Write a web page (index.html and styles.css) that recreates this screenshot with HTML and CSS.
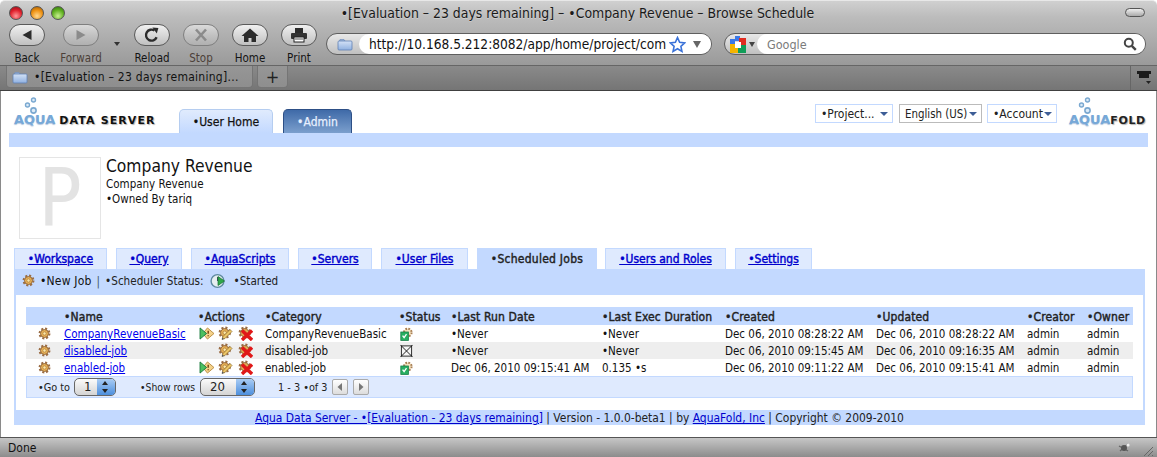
FILE: index.html
```html
<!DOCTYPE html>
<html lang="en">
<head>
<meta charset="utf-8">
<title>Browse Schedule</title>
<link rel="stylesheet" href="styles.css">
</head>
<body>
<svg class="defs" xmlns="http://www.w3.org/2000/svg">
  <defs>
    <linearGradient id="gfold" x1="0" y1="0" x2="0" y2="1"><stop offset="0" stop-color="#d4e2f6"/><stop offset="1" stop-color="#8fb0e0"/></linearGradient>
    <symbol id="gear" viewBox="0 0 14 14">
      <circle cx="7" cy="7" r="5.3" fill="none" stroke="#9a6c44" stroke-width="2.2" stroke-dasharray="2.2 1.96"/>
      <circle cx="7" cy="7" r="4.3" fill="#e6b056" stroke="#8e6238" stroke-width="1"/>
      <circle cx="7" cy="7" r="1.8" fill="#fbe8a8" stroke="#b07e3c" stroke-width=".8"/>
    </symbol>
    <symbol id="folder" viewBox="0 0 16 14">
      <path d="M3 2.5h4l1 1.5H2.5z" fill="#b8cdea" stroke="#6f8dbb" stroke-width=".7"/>
      <rect x="1" y="4" width="14" height="9" rx="1" fill="url(#gfold)" stroke="#5f80b4" stroke-width=".8"/>
    </symbol>
    <symbol id="run" viewBox="0 0 17 14">
      <path d="M9 1l7 6-7 6-5-6z" fill="#f4d28a" stroke="#b98a40"/>
      <path d="M9.8 4v3.4M9.8 8.8v1.2" stroke="#7a4a10" stroke-width="1.6"/>
      <path d="M1 1l7 6-7 6z" fill="#4cc060" stroke="#17783a"/>
    </symbol>
    <symbol id="edit" viewBox="0 0 15 15">
      <use href="#gear" x="0" y="0" width="13.5" height="13.5"/>
      <path d="M4 13.5l1-3 7-7 2 2-7 7z" fill="#ecc566" stroke="#8a6a2e" stroke-width=".7"/>
      <path d="M4 13.5l.6-1.8 1.2 1.2z" fill="#23407a"/>
    </symbol>
    <symbol id="del" viewBox="0 0 15 15">
      <use href="#gear" x="0" y="0" width="13.5" height="13.5"/>
      <path d="M4 4.5l10 9.5M14 4.5l-10 9.5" stroke="#e01818" stroke-width="3.4"/>
    </symbol>
    <symbol id="enabled" viewBox="0 0 13 14">
      <circle cx="7.8" cy="5.4" r="3.8" fill="#f6e4c0" stroke="#a87e54" stroke-width="2" stroke-dasharray="1.7 1.3"/>
      <rect x=".8" y="5" width="7.6" height="8.4" fill="#27ae60" stroke="#17804a" stroke-width=".8"/>
      <path d="M2.6 8.6l1.5 2 2.4-3.4" fill="none" stroke="#fff" stroke-width="1.3"/>
    </symbol>
    <symbol id="disabled" viewBox="0 0 14 14">
      <rect x="1.5" y="1.5" width="11" height="11" fill="#f4f4f4" stroke="#222"/>
      <path d="M.5.5l13 13M13.5.5l-13 13" stroke="#111" stroke-width="1"/>
    </symbol>
    <symbol id="started" viewBox="0 0 16 16">
      <circle cx="7.5" cy="8" r="6.4" fill="#e6eef0" stroke="#5e8aa0" stroke-width="1.4"/>
      <path d="M7.5 4v4" stroke="#446" stroke-width="1"/>
      <path d="M8 3.5l6.5 4.5L8 12.5z" fill="#2fa84a" stroke="#157030" stroke-width=".7"/>
    </symbol>
    <symbol id="bubbles" viewBox="0 0 16 18">
      <circle cx="10.5" cy="3" r="2" fill="#dcebf8" stroke="#7aa8d0" stroke-width="1.4"/>
      <circle cx="4.5" cy="8" r="2" fill="#dcebf8" stroke="#7aa8d0" stroke-width="1.4"/>
      <circle cx="10.5" cy="13.5" r="2.6" fill="#dcebf8" stroke="#7aa8d0" stroke-width="1.6"/>
    </symbol>
  </defs>
</svg>

<div class="window">
  <header class="chrome">
    <div class="titlebar">
      <div class="lights">
        <span class="light red"></span><span class="light yellow"></span><span class="light green"></span>
      </div>
      <div class="wintitle">•[Evaluation – 23 days remaining] – •Company Revenue – Browse Schedule</div>
      <span class="pill-toggle"></span>
    </div>
    <div class="toolbar">
      <div class="tool"><span class="toolbtn"><svg class="tool-ico" viewBox="0 0 20 16"><path d="M5.5 8l9-5v10z" fill="#2c2c2c"/></svg></span><span class="toollabel">Back</span></div>
      <div class="tool tool-forward dim"><span class="toolbtn"><svg class="tool-ico" viewBox="0 0 20 16"><path d="M14.5 8l-9-5v10z" fill="#8b8b8b"/></svg></span><span class="toollabel">Forward</span></div>
      <span class="histarrow"></span>
      <div class="tool"><span class="toolbtn"><svg class="tool-ico" viewBox="0 0 20 16"><path d="M14.6 10.2A5.5 5.5 0 1 1 12.6 3.6" fill="none" stroke="#2c2c2c" stroke-width="2.4"/><path d="M10.4 .4l6 .6-1.6 5.6z" fill="#2c2c2c"/></svg></span><span class="toollabel">Reload</span></div>
      <div class="tool dim"><span class="toolbtn"><svg class="tool-ico" viewBox="0 0 20 16"><path d="M5 2.5l10 11M15 2.5l-10 11" stroke="#8b8b8b" stroke-width="2.6"/></svg></span><span class="toollabel">Stop</span></div>
      <div class="tool"><span class="toolbtn"><svg class="tool-ico" viewBox="0 0 20 16"><path d="M10 1.5L1.5 9H4v6h4.5v-4h3v4H16V9h2.5z" fill="#2c2c2c"/></svg></span><span class="toollabel">Home</span></div>
      <div class="tool"><span class="toolbtn"><svg class="tool-ico" viewBox="0 0 20 16"><rect x="6" y="1" width="8" height="5" fill="#2c2c2c"/><rect x="2" y="6" width="16" height="6" rx="1" fill="#333"/><rect x="5" y="10" width="10" height="5" fill="#fff" stroke="#222"/><path d="M6 12h8" stroke="#555"/></svg></span><span class="toollabel">Print</span></div>
      <div class="address">
        <svg class="addr-ico"><use href="#folder"/></svg>
        <div class="url">
          <span class="urltext">http://10.168.5.212:8082/app/home/project/com</span>
          <svg class="star" viewBox="0 0 16 16"><path d="M8 1.5l2 4.5 4.8.5-3.6 3.2 1 4.8L8 12l-4.2 2.5 1-4.8L1.2 6.5 6 6z" fill="#fff" stroke="#3a72d8" stroke-width="1.5"/></svg>
          <span class="urlarrow"></span>
        </div>
      </div>
      <div class="search">
        <div class="engine">
          <svg class="goog" viewBox="0 0 16 17"><rect x="5" y="0" width="5" height="5" fill="#3b78e7"/><rect x="9" y="2" width="7" height="7" fill="#e02c20"/><rect x="0" y="7" width="8" height="10" fill="#f4b400"/><rect x="0" y="3" width="5" height="5" fill="#3b78e7"/><rect x="8" y="9" width="8" height="8" fill="#109d58"/><rect x="5" y="6" width="6" height="6" fill="#fff"/></svg>
          <span class="engarrow"></span>
        </div>
        <div class="searchfield">
          <span class="placeholder">Google</span>
          <svg class="mag" viewBox="0 0 14 14"><circle cx="5.8" cy="5.8" r="4" fill="none" stroke="#444" stroke-width="2"/><path d="M8.8 8.8l4 4" stroke="#444" stroke-width="2.4"/></svg>
        </div>
      </div>
    </div>
  </header>

  <nav class="tabbar">
    <div class="btab btab-main">
      <svg class="btab-ico"><use href="#folder"/></svg>
      <span>•[Evaluation – 23 days remaining]...</span>
    </div>
    <div class="btab btab-plus">+</div>
    <div class="tabbar-right">
      <svg class="tray" viewBox="0 0 16 16"><path d="M1 1h14v3h-2v4H3V4H1z" fill="#1c1c1c"/><path d="M10 11h5l-2.5 3z" fill="#222"/></svg>
    </div>
  </nav>

  <main class="page">
    <div class="apphead">
      <div class="logo logo-ads">
        <svg class="bubbles"><use href="#bubbles"/></svg>
        <div class="logotext"><span class="aqua">AQUA</span><span class="dark">DATA SERVER</span></div>
      </div>
      <div class="maintab maintab-on">•User Home</div>
      <div class="maintab maintab-off">•Admin</div>
      <div class="menus">
        <div class="menu menu-project">•Project...<span class="caret"></span></div>
        <div class="menu menu-grey">English (US)<span class="caret"></span></div>
        <div class="menu menu-account">•Account<span class="caret"></span></div>
      </div>
      <div class="logo logo-af">
        <svg class="bubbles bubbles-af"><use href="#bubbles"/></svg>
        <div class="logotext"><span class="aqua">AQUA</span><span class="dark dark-af">FOLD</span></div>
      </div>
    </div>
    <div class="bluebar"></div>

    <section class="project">
      <div class="avatar">P</div>
      <div class="projinfo">
        <div class="projname">Company Revenue</div>
        <div class="projline">Company Revenue</div>
        <div class="projline">•Owned By tariq</div>
      </div>
    </section>

    <section class="workspace">
      <div class="subtabs">
        <a class="subtab st-workspace" href="#">•Workspace</a>
        <a class="subtab st-query" href="#">•Query</a>
        <a class="subtab st-scripts" href="#">•AquaScripts</a>
        <a class="subtab st-servers" href="#">•Servers</a>
        <a class="subtab st-files" href="#">•User Files</a>
        <span class="subtab subtab-on st-jobs">•Scheduled Jobs</span>
        <a class="subtab st-users" href="#">•Users and Roles</a>
        <a class="subtab st-settings" href="#">•Settings</a>
      </div>
      <div class="jobbar">
        <svg class="ico-newjob"><use href="#gear"/></svg>
        <span class="jb-new">•New Job</span>
        <span class="jb-sep">|</span>
        <span>•Scheduler Status:</span>
        <svg class="ico-started"><use href="#started"/></svg>
        <span class="jb-started">•Started</span>
      </div>
      <div class="panel">
        <table class="jobs">
          <colgroup>
            <col class="c-ico"><col class="c-name"><col class="c-act"><col class="c-cat"><col class="c-stat">
            <col class="c-run"><col class="c-exec"><col class="c-date"><col class="c-date"><col class="c-creator"><col class="c-owner">
          </colgroup>
          <thead>
            <tr><th></th><th>•Name</th><th>•Actions</th><th>•Category</th><th>•Status</th><th>•Last Run Date</th><th>•Last Exec Duration</th><th>•Created</th><th>•Updated</th><th>•Creator</th><th>•Owner</th></tr>
          </thead>
          <tbody>
            <tr>
              <td class="td-ico"><svg class="ico-row"><use href="#gear"/></svg></td>
              <td><a href="#">CompanyRevenueBasic</a></td>
              <td class="td-act"><svg class="ico-run"><use href="#run"/></svg><svg class="ico-act"><use href="#edit"/></svg><svg class="ico-act"><use href="#del"/></svg></td>
              <td>CompanyRevenueBasic</td>
              <td class="td-stat"><svg class="ico-stat"><use href="#enabled"/></svg></td>
              <td class="muted">•Never</td><td class="muted">•Never</td>
              <td>Dec 06, 2010 08:28:22 AM</td><td>Dec 06, 2010 08:28:22 AM</td><td>admin</td><td>admin</td>
            </tr>
            <tr class="alt">
              <td class="td-ico"><svg class="ico-row"><use href="#gear"/></svg></td>
              <td><a href="#">disabled-job</a></td>
              <td class="td-act"><span class="ico-run"></span><svg class="ico-act"><use href="#edit"/></svg><svg class="ico-act"><use href="#del"/></svg></td>
              <td>disabled-job</td>
              <td class="td-stat"><svg class="ico-stat"><use href="#disabled"/></svg></td>
              <td class="muted">•Never</td><td class="muted">•Never</td>
              <td>Dec 06, 2010 09:15:45 AM</td><td>Dec 06, 2010 09:16:35 AM</td><td>admin</td><td>admin</td>
            </tr>
            <tr>
              <td class="td-ico"><svg class="ico-row"><use href="#gear"/></svg></td>
              <td><a href="#">enabled-job</a></td>
              <td class="td-act"><svg class="ico-run"><use href="#run"/></svg><svg class="ico-act"><use href="#edit"/></svg><svg class="ico-act"><use href="#del"/></svg></td>
              <td>enabled-job</td>
              <td class="td-stat"><svg class="ico-stat"><use href="#enabled"/></svg></td>
              <td>Dec 06, 2010 09:15:41 AM</td><td>0.135 •s</td>
              <td>Dec 06, 2010 09:11:22 AM</td><td>Dec 06, 2010 09:15:41 AM</td><td>admin</td><td>admin</td>
            </tr>
          </tbody>
        </table>
        <div class="pager">
          <span class="pg-goto">•Go to</span>
          <span class="stepper st-1"><span class="st-val">1</span><span class="st-btn"></span></span>
          <span class="pg-show">•Show rows</span>
          <span class="stepper st-20"><span class="st-val">20</span><span class="st-btn"></span></span>
          <span class="pg-range">1 - 3 •of 3</span>
          <span class="pgbtn pgbtn-first"><svg class="pg-arrow" viewBox="0 0 8 10"><path d="M6 1L1.5 5 6 9z" fill="#777"/></svg></span>
          <span class="pgbtn"><svg class="pg-arrow" viewBox="0 0 8 10"><path d="M2 1l4.5 4L2 9z" fill="#777"/></svg></span>
        </div>
      </div>
      <footer class="pagefoot">
        <a href="#">Aqua Data Server - •[Evaluation - 23 days remaining]</a> | Version - 1.0.0-beta1 | by <a href="#">AquaFold, Inc</a> | Copyright © 2009-2010
      </footer>
    </section>
  </main>

  <footer class="statusbar">
    <span class="done">Done</span>
    <svg class="bug" viewBox="0 0 18 14"><path d="M5 10l8-7M4 5l9 5" stroke="#666" stroke-width="1.4"/><circle cx="9" cy="7" r="3" fill="#555"/><circle cx="13" cy="4" r="1.6" fill="#eee"/></svg>
    <svg class="grip" viewBox="0 0 12 12"><path d="M11 2L2 11M11 6l-5 5M11 10l-1 1" stroke="#666" stroke-width="1"/></svg>
  </footer>
</div>
</body>
</html>
```
FILE: styles.css
```css
* { box-sizing: border-box; }
html, body { margin: 0; padding: 0; }
body {
  width: 1157px;
  height: 457px;
  overflow: hidden;
  background: #fff;
  color: #111;
  font-family: "DejaVu Sans Condensed", "Liberation Sans", sans-serif;
  font-size: 12px;
}
.defs { width: 0; height: 0; display: block; }
.window { height: 457px; display: flex; flex-direction: column; }

/* browser chrome */
.chrome {
  height: 65px;
  background: linear-gradient(#d0d0d0, #bcbcbc 25%, #9a9a9a);
  border-radius: 5px 5px 0 0;
  border-top: 1px solid #e8e8e8;
  flex: none;
}
.titlebar { height: 23px; display: flex; align-items: center; padding: 0 12px 0 9px; }
.lights { display: flex; gap: 7px; width: 64px; }
.light { width: 14px; height: 14px; border-radius: 50%; border: 1px solid #555; }
.red { background: radial-gradient(circle at 50% 75%, #ff9a9a, #e0202c 55%, #8c0f18); }
.yellow { background: radial-gradient(circle at 50% 75%, #ffd890, #ee9010 55%, #985808); }
.green { background: radial-gradient(circle at 50% 75%, #c8f090, #60b020 55%, #2c700c); }
.wintitle { flex: 1; text-align: center; font-size: 13.88px; color: #1a1a1a; padding-right: 43px; text-shadow: 0 1px 0 rgba(255,255,255,.3); white-space: nowrap; }
.pill-toggle { width: 20px; height: 9px; border: 1px solid #555; border-radius: 5px; background: linear-gradient(#eee, #aaa); }

.toolbar { display: flex; align-items: flex-start; padding-left: 9px; height: 41px; }
.tool { width: 36px; margin-right: 13px; display: flex; flex-direction: column; align-items: center; }
.tool-forward { margin-left: 5px; margin-right: 15px; }
.toolbtn {
  width: 36px; height: 22px; border: 1px solid #5a5a5a; border-radius: 11px;
  background: linear-gradient(#f0f0f0, #d8d8d8 50%, #c0c0c0);
  display: flex; align-items: center; justify-content: center;
}
.dim .toolbtn { border-color: #7f7f7f; background: linear-gradient(#dadada, #c2c2c2 50%, #b0b0b0); }
.tool-ico { width: 20px; height: 16px; }
.toollabel { white-space: nowrap; font-size: 11.5px; line-height: 14px; margin-top: 5px; color: #141414; }
.dim .toollabel { color: #4c4038; }
.histarrow { width: 0; height: 0; margin: 18px 14px 0 0; border: 3px solid transparent; border-top: 4px solid #333; border-bottom: 0; }

.address {
  width: 386px; height: 22px; margin-top: 9px; margin-left: -4px; margin-right: 12px;
  border: 1px solid #5f5f5f; border-radius: 11px; background: linear-gradient(#e8e8e8, #c0c0c0);
  display: flex; align-items: stretch; flex: none;
}
.addr-ico { width: 16px; height: 14px; margin: 3px 6px 0 10px; flex: none; }
.url { flex: 1; background: #fff; border-radius: 10px; display: flex; align-items: center; padding: 0 10px 0 10px; min-width: 0; }
.urltext { flex: 1; font-size: 13.6px; color: #111; white-space: nowrap; }
.star { width: 17px; height: 17px; margin-right: 7px; flex: none; }
.urlarrow { border: 4px solid transparent; border-top: 7px solid #666; border-bottom: 0; }

.search { display: flex; width: 422px; height: 22px; margin-top: 9px; border: 1px solid #5f5f5f; border-radius: 11px; background: linear-gradient(#e8e8e8, #c0c0c0); flex: none; }
.engine { width: 32px; display: flex; align-items: center; padding-left: 5px; gap: 2px; flex: none; }
.goog { width: 16px; height: 17px; flex: none; }
.engarrow { border: 3px solid transparent; border-top: 5px solid #444; border-bottom: 0; margin-left: 1px; }
.searchfield { flex: 1; background: #fff; border-radius: 10px; display: flex; align-items: center; justify-content: space-between; padding: 0 8px 0 10px; }
.placeholder { font-size: 12.5px; color: #7b7b7b; }
.mag { width: 14px; height: 14px; }

.tabbar {
  height: 26px; flex: none; display: flex; align-items: flex-start; padding-left: 6px; gap: 4px;
  background: linear-gradient(#8a8a8a, #757575);
  border-top: 1px solid #666;
  border-bottom: 1px solid #404040;
}
.btab { height: 22px; background: linear-gradient(#969696, #8e8e8e); border: 1px solid #757575; border-top: 0; border-radius: 0 0 4px 4px; display: flex; align-items: center; color: #111; }
.btab-main { width: 247px; padding-left: 5px; gap: 6px; font-size: 12px; letter-spacing: .27px; white-space: nowrap; }
.btab-ico { width: 16px; height: 14px; flex: none; }
.btab-plus { width: 31px; justify-content: center; font-size: 18px; color: #222; }
.tabbar-right { margin-left: auto; width: 27px; height: 24px; border-left: 1px solid #666; display: flex; align-items: center; justify-content: center; }
.tray { width: 16px; height: 16px; }

/* page */
.page { height: 346px; flex: none; background: #fff; border-left: 1px solid #8a8a8a; border-right: 1px solid #8a8a8a; }
.apphead { height: 42px; display: flex; align-items: flex-end; padding-left: 13px; }
.logo { display: flex; flex-direction: column; align-self: flex-start; margin-top: 6px; }
.logo-ads { width: 165px; }
.bubbles { width: 16px; height: 18px; margin-left: 9px; display: block; margin-bottom: -3px; }
.bubbles-af { margin-left: 8px; }
.logotext { display: flex; align-items: baseline; font-weight: bold; font-family: "DejaVu Sans", sans-serif; white-space: nowrap; }
.aqua { color: #76a8d8; font-size: 13px; text-shadow: 0 1px 1px rgba(60,110,170,.4); }
.dark { color: #111; font-size: 11px; letter-spacing: 1.1px; margin-left: 4px; text-shadow: 1px 1px 1px rgba(0,0,0,.3); }
.dark-af { margin-left: 0; color: #222; letter-spacing: .6px; }
.maintab { height: 24px; border-radius: 5px 5px 0 0; display: flex; align-items: center; justify-content: center; font-size: 12px; -webkit-text-stroke: .25px currentColor; }
.maintab-on { width: 94px; background: linear-gradient(#e0ebfd, #c3d9ff); border: 1px solid #b5cdf0; border-bottom: 0; color: #111; }
.maintab-off { width: 69px; margin-left: 10px; background: linear-gradient(#3f6aa8, #7b9fcd); border: 1px solid #2d4f86; border-bottom: 0; color: #e8f0ff; }
.menus { margin-left: auto; display: flex; gap: 6px; align-self: flex-start; margin-top: 13px; margin-right: 12px; }
.menu { height: 19px; padding: 0 4px 0 5px; border: 1px solid #c3d9ff; display: flex; align-items: center; justify-content: space-between; color: #222; background: #fff; white-space: nowrap; }
.menu-project { width: 78px; }
.menu-grey { width: 83px; border-color: #bbb; font-size: 11.4px; }
.menu-account { width: 70px; margin-left: -1px; }
.caret { border: 4px solid transparent; border-top: 4px solid #3d5d96; border-bottom: 0; width: 0; height: 0; }
.logo-af { width: 76px; margin-right: 11px; }
.bluebar { height: 14px; margin: 0 8px; background: #c3d9ff; }

.project { display: flex; padding-left: 18px; margin-top: 10px; gap: 5px; height: 82px; }
.avatar {
  width: 82px; height: 82px; border: 1px solid #e5e5e5; color: #e3e3e3; padding-top: 3px;
  font-size: 80px; line-height: 76px; text-align: center; font-family: "DejaVu Sans Condensed", sans-serif;
}
.projname { font-size: 17.3px; line-height: 22px; margin-top: -2px; color: #111; }
.projline { font-size: 11.5px; line-height: 15px; color: #111; }

.workspace { margin: 9px 11px 0 13px; }
.subtabs { display: flex; gap: 9px; height: 21px; -webkit-text-stroke: .4px currentColor; }
.subtab { height: 21px; display: flex; align-items: center; justify-content: center; background: #dfeafe; border: 1px solid #c3d9ff; border-bottom: 0; color: #00c; white-space: nowrap; }
.subtab-on { background: #c3d9ff; color: #222; letter-spacing: .25px; }
.st-workspace { width: 93px; } .st-query { width: 66px; } .st-scripts { width: 98px; } .st-servers { width: 74px; }
.st-files { width: 87px; } .st-jobs { width: 120px; margin-right: -1px; } .st-users { width: 121px; } .st-settings { width: 77px; }
.jobbar { height: 26px; background: #c3d9ff; display: flex; align-items: center; padding: 0 0 3px 8px; color: #222; white-space: nowrap; font-size: 11.6px; }
.ico-newjob { width: 13px; height: 13px; margin-right: 5px; }
.jb-new { color: #111; font-size: 12px; letter-spacing: .2px; }
.jb-sep { margin: 0 5px; color: #456; }
.ico-started { width: 16px; height: 16px; margin: 0 6px; }
.jb-started { margin-left: 2px; }
.panel { padding: 12px 10px; border-left: 2px solid #c3d9ff; border-right: 2px solid #c3d9ff; height: 115px; }
.jobs { width: 1107px; table-layout: fixed; border-collapse: collapse; font-size: 11.5px; }
.c-ico { width: 36px; } .c-name { width: 134px; } .c-act { width: 67px; } .c-cat { width: 134px; } .c-stat { width: 52px; }
.c-run { width: 151px; } .c-exec { width: 123px; } .c-date { width: 151px; } .c-creator { width: 60px; } .c-owner { width: 48px; }
.jobs th { height: 18px; padding: 1px 0 0 2px; background: #c3d9ff; font-size: 12px; font-weight: normal; letter-spacing: .12px; -webkit-text-stroke: .4px currentColor; text-align: left; color: #222; white-space: nowrap; }
.jobs td { height: 17px; padding: 0 0 0 2px; white-space: nowrap; color: #111; overflow: visible; }
.jobs a { color: #00e; }
.alt td { background: #eee; }
.muted { color: #333; }
.td-ico { text-align: center; }
.ico-row { width: 13px; height: 13px; display: block; margin: 0 0 0 10px; }
.td-act { font-size: 0; }
.ico-run { width: 16px; height: 13px; display: inline-block; margin-left: 1px; vertical-align: middle; }
.ico-act { width: 15px; height: 15px; margin-left: 3px; vertical-align: middle; }
.ico-act + .ico-act { margin-left: 5px; }
.ico-stat { width: 13px; height: 14px; display: block; margin-left: 1px; }
.pager { height: 22px; background: #dfeafe; border: 1px solid #c3d9ff; display: flex; align-items: center; padding-left: 11px; color: #222; white-space: nowrap; font-size: 10.8px; }
.stepper { height: 18px; display: flex; border: 1px solid #666; border-radius: 5px; background: linear-gradient(#fbfbfb, #d4d4d4); overflow: hidden; margin-left: 4px; flex: none; }
.st-1 { width: 42px; }
.st-20 { width: 55px; }
.st-val { flex: 1; padding-left: 9px; line-height: 16px; font-size: 13px; }
.st-btn { width: 18px; background: linear-gradient(#a9ccf4, #4d8fdd); position: relative; }
.st-btn::before, .st-btn::after { content: ""; position: absolute; left: 5px; border: 3.5px solid transparent; }
.st-btn::before { top: -1px; border-bottom: 4px solid #222; border-top: 0; margin-top: 3px; }
.st-btn::after { bottom: 2px; border-top: 4px solid #222; border-bottom: 0; }
.pg-show { margin-left: 24px; width: 56px; font-size: 10.3px; }
.pg-range { margin-left: 23px; }
.pgbtn { width: 16px; height: 16px; margin-left: 5px; border: 1px solid #aaa; border-radius: 2px; background: linear-gradient(#fff, #ddd); display: flex; align-items: center; justify-content: center; }
.pgbtn-first { margin-left: 4px; }
.pg-arrow { width: 8px; height: 10px; }
.pagefoot { height: 15px; background: #c3d9ff; text-align: center; line-height: 17px; color: #222; white-space: nowrap; font-size: 11.95px; }
.pagefoot a { color: #00c; }

/* status bar */
.statusbar {
  height: 20px; flex: none; display: flex; align-items: center; padding: 0 3px 0 8px;
  border-top: 1px solid #555; background: linear-gradient(#c6c6c6, #8c8c8c);
  font-size: 12px; color: #111;
}
.done { flex: 1; }
.bug { width: 18px; height: 14px; margin-right: 9px; }
.grip { width: 12px; height: 12px; margin-top: 6px; }
```
